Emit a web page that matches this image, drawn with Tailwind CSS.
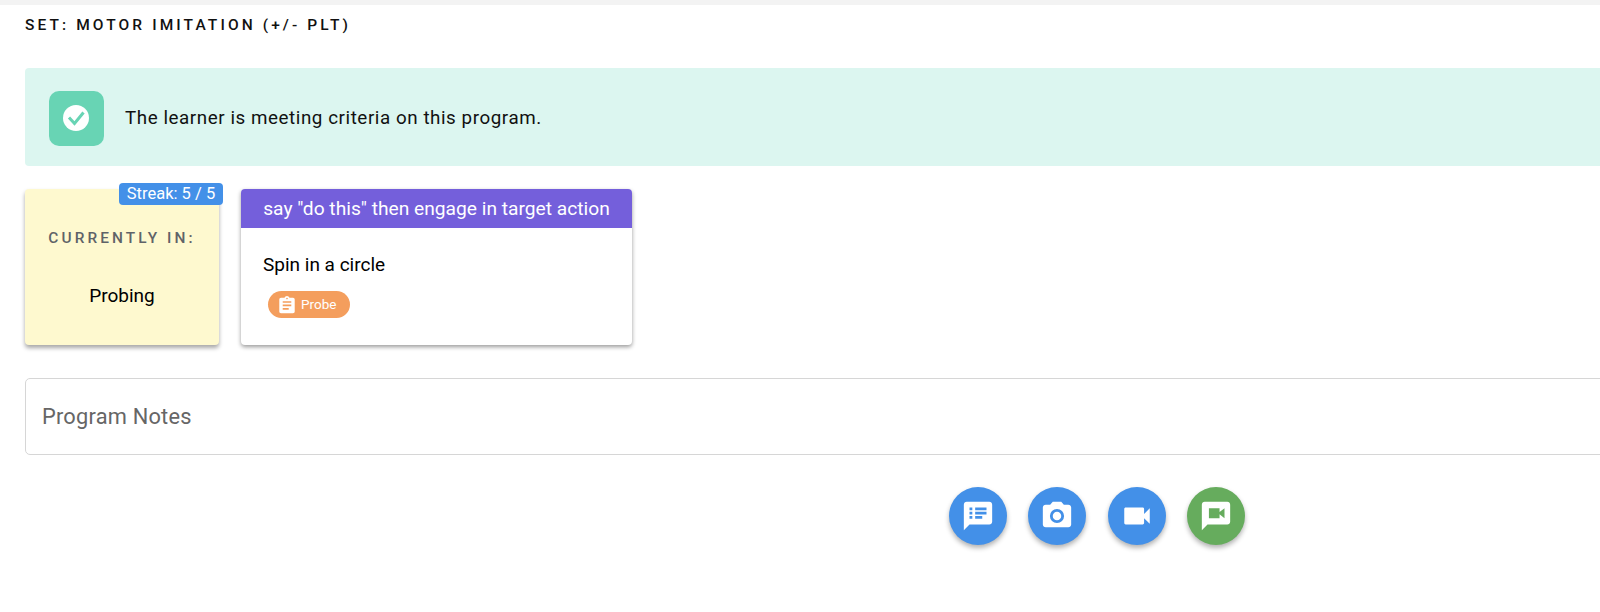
<!DOCTYPE html>
<html lang="en">
<head>
    <meta charset="UTF-8">
    <meta name="viewport" content="width=device-width, initial-scale=1.0">
    <title>Program</title>
    <script src="https://cdn.jsdelivr.net/npm/@tailwindcss/browser@4"></script>
</head>
<body class="bg-white font-['Roboto',sans-serif] overflow-hidden">

    <!-- Top edge -->
    <div class="h-[5px] bg-[#f3f3f3]"></div>

    <main class="pl-[25px] w-[1600px] h-[607px] overflow-hidden">
        <h2 class="pt-[10px] h-[63px] text-[15.5px] leading-[20px] font-medium tracking-[0.2em] text-[#111]">SET: MOTOR IMITATION (+/- PLT)</h2>

        <!-- Criteria banner -->
        <div class="flex items-center gap-[21px] h-[98px] w-[1600px] pl-[24px] pt-[2px] bg-[#dcf6f0] rounded-l-[4px]">
            <div class="flex items-center justify-center w-[55px] h-[55px] rounded-[10px] bg-[#68d4b4]">
                <svg class="w-[30px] h-[30px]" viewBox="0 0 30 30">
                    <circle cx="14" cy="15" r="13" fill="#fff"/>
                    <path d="M7 14.500l5.500 6L21.500 9.500" fill="none" stroke="#68d4b4" stroke-width="3"/>
                </svg>
            </div>
            <p class="text-[18.8px] tracking-[0.03em] text-[#111]">The learner is meeting criteria on this program.</p>
        </div>

        <!-- Cards -->
        <div class="flex gap-[22px] mt-[23px]">
            <div class="relative w-[194px] h-[156px] rounded-[4px] bg-[#fef9cf] shadow-[0_3px_4px_rgba(0,0,0,0.35)] text-center">
                <span class="absolute -top-[6px] -right-[4px] h-[22px] w-[104px] rounded-[4px] bg-[#4390e8] text-white text-[16.5px] leading-[22px]">Streak: 5 / 5</span>
                <p class="pt-[39px] text-[15.4px] leading-[20px] font-medium tracking-[0.2em] text-[#5f6368]">CURRENTLY IN:</p>
                <p class="mt-[36px] text-[19px] leading-[24px] text-black">Probing</p>
            </div>
            <div class="w-[391px] h-[156px] rounded-[4px] bg-white shadow-[0_2px_4px_rgba(0,0,0,0.4)] overflow-hidden">
                <div class="h-[39px] bg-[#745fdb] text-white text-center text-[19.200px] leading-[39px]">say "do this" then engage in target action</div>
                <div class="pt-[25px] pl-[22px]">
                    <p class="text-[19px] leading-[24px] text-black">Spin in a circle</p>
                    <span class="inline-flex items-center gap-[6px] mt-[14px] ml-[5px] h-[27px] w-[82px] pl-[11px] rounded-full bg-[#f49e5d] text-white text-[13.500px]">
                        <svg class="w-[16px] h-[18px]" viewBox="3 1 18 21" fill="#fff">
                            <path d="M19 3h-4.180C14.400 1.840 13.300 1 12 1s-2.400.84-2.820 2H5c-1.100 0-2 .9-2 2v14c0 1.100.9 2 2 2h14c1.100 0 2-.9 2-2V5c0-1.100-.9-2-2-2zm-7 0c.55 0 1 .45 1 1s-.45 1-1 1-1-.45-1-1 .45-1 1-1zm2 14H7v-2h7v2zm3-4H7v-2h10v2zm0-4H7V7h10v2z"/>
                        </svg>
                        Probe
                    </span>
                </div>
            </div>
        </div>

        <!-- Notes -->
        <div class="flex items-center mt-[33px] w-[1600px] h-[77px] pl-[16px] pt-[2px] border border-[#d6d6d6] rounded-l-[5px] text-[21.800px] tracking-[0.01em] text-[#666]">Program Notes</div>

        <!-- Actions -->
        <div class="flex gap-[21.400px] mt-[32px] ml-[924px]">
            <button class="flex items-center justify-center w-[58px] h-[58px] rounded-full bg-[#4390e8] shadow-[0_3px_5px_rgba(0,0,0,0.3)]">
                <svg class="w-[34px] h-[34px]" viewBox="0 0 24 24" fill="#fff">
                    <path d="M20 2H4c-1.100 0-2 .9-2 2v18l4-4h14c1.100 0 2-.9 2-2V4c0-1.100-.9-2-2-2zM8 14H6v-2h2v2zm0-3H6V9h2v2zm0-3H6V6h2v2zm7 6h-5v-2h5v2zm3-3h-8V9h8v2zm0-3h-8V6h8v2z"/>
                </svg>
            </button>
            <button class="flex items-center justify-center w-[58px] h-[58px] rounded-full bg-[#4390e8] shadow-[0_3px_5px_rgba(0,0,0,0.3)]">
                <svg class="w-[34px] h-[34px]" viewBox="0 0 24 24" fill="#fff">
                    <path fill-rule="evenodd" d="M9 2L7.170 4H4c-1.100 0-2 .9-2 2v12c0 1.100.9 2 2 2h16c1.100 0 2-.9 2-2V6c0-1.100-.9-2-2-2h-3.170L15 2H9zm3 15a5 5 0 1 1 0-10 5 5 0 0 1 0 10zm0-2a3 3 0 1 0 0-6 3 3 0 0 0 0 6z"/>
                </svg>
            </button>
            <button class="flex items-center justify-center w-[58px] h-[58px] rounded-full bg-[#4390e8] shadow-[0_3px_5px_rgba(0,0,0,0.3)]">
                <svg class="w-[34px] h-[34px]" viewBox="0 0 24 24" fill="#fff">
                    <path d="M17 10.500V7c0-.55-.45-1-1-1H4c-.55 0-1 .45-1 1v10c0 .55.45 1 1 1h12c.55 0 1-.45 1-1v-3.500l4 4v-11l-4 4z"/>
                </svg>
            </button>
            <button class="flex items-center justify-center w-[58px] h-[58px] rounded-full bg-[#66ac5d] shadow-[0_3px_5px_rgba(0,0,0,0.3)]">
                <svg class="w-[34px] h-[34px]" viewBox="0 0 24 24" fill="#fff">
                    <path fill-rule="evenodd" d="M20 2H4c-1.100 0-2 .9-2 2v18l4-4h14c1.100 0 2-.9 2-2V4c0-1.100-.9-2-2-2zM7 6.500h7.500v2.700L18 6.500v7l-3.500-2.700v2.700H7z"/>
                </svg>
            </button>
        </div>
    </main>

</body>
</html>
